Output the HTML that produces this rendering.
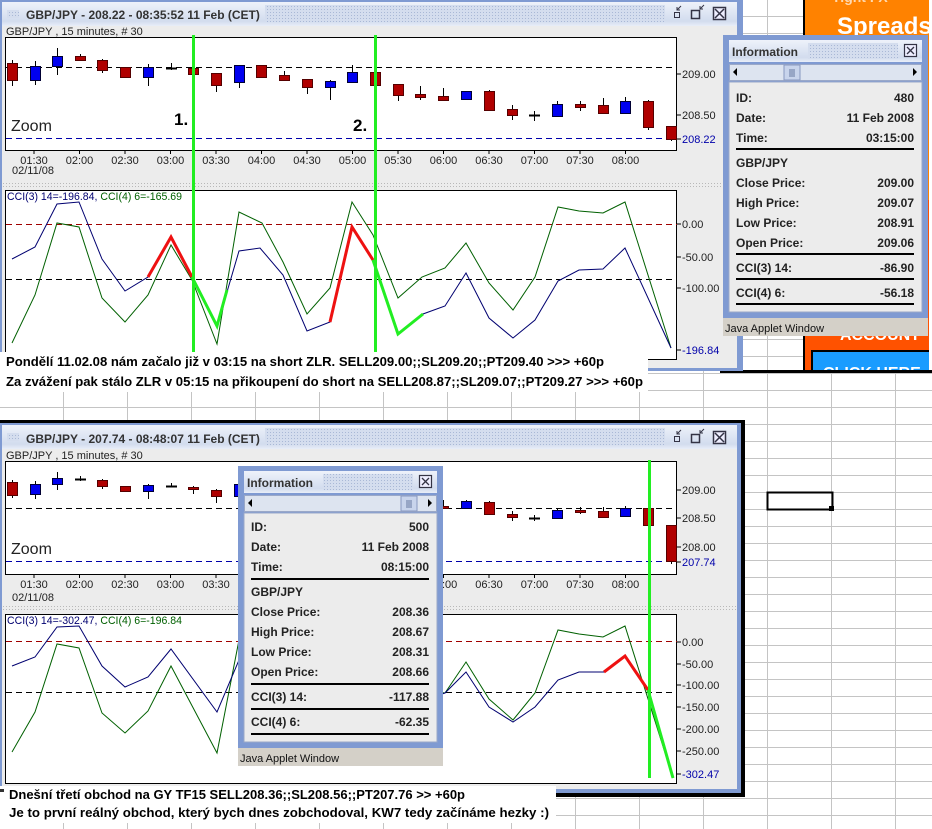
<!DOCTYPE html>
<html><head><meta charset="utf-8">
<style>
html,body{margin:0;padding:0;background:#fff;width:932px;height:829px;overflow:hidden}
svg{display:block}
text{font-family:"Liberation Sans",Arial,sans-serif}
</style></head>
<body>
<svg id="s" width="932" height="829" viewBox="0 0 932 829" xmlns="http://www.w3.org/2000/svg">
<defs>
<pattern id="grid" patternUnits="userSpaceOnUse" x="63" y="407" width="64" height="17">
<path d="M0.5 0V17M0 0.5H64" stroke="#c4c4c4" stroke-width="1" fill="none"/>
</pattern>
<pattern id="dots" patternUnits="userSpaceOnUse" width="3" height="3">
<rect width="3" height="3" fill="#d4ddee"/><rect width="1" height="1" fill="#a9b8d6"/>
</pattern>
<pattern id="dots2" patternUnits="userSpaceOnUse" width="3" height="3">
<rect width="3" height="3" fill="#ececec"/><rect width="1" height="1" fill="#b8b8b8"/>
</pattern>
<linearGradient id="tg" x1="0" y1="0" x2="0" y2="1">
<stop offset="0" stop-color="#eef2fa"/><stop offset="0.8" stop-color="#d2dcee"/><stop offset="1" stop-color="#e8eef8"/>
</linearGradient>
<clipPath id="c1"><rect x="6" y="38" width="671" height="112"/></clipPath>
<clipPath id="c2"><rect x="6" y="191" width="671" height="168"/></clipPath>
<clipPath id="c3"><rect x="6" y="462" width="671" height="112"/></clipPath>
<clipPath id="c4"><rect x="6" y="615" width="671" height="168"/></clipPath>
<clipPath id="ad"><rect x="805" y="0" width="124" height="370"/></clipPath>
</defs>
<rect width="932" height="829" fill="#fff"/>
<rect width="932" height="829" fill="url(#grid)"/>

<!-- Ad -->
<rect x="803" y="0" width="129" height="372" fill="#000"/>
<g clip-path="url(#ad)">
<rect x="805" y="0" width="124" height="200" fill="#ff8200"/>
<rect x="805" y="200" width="124" height="170" fill="#ff5200"/>
<text x="832" y="2" font-size="14" font-weight="bold" fill="#ffd9b0">Tight FX</text>
<text x="837" y="34" font-size="24" font-weight="bold" fill="#fff">Spreads</text>
<text x="840" y="340" font-size="16" font-weight="bold" fill="#fff">ACCOUNT</text>
<rect x="811" y="350" width="120" height="22" fill="#000"/>
<rect x="813" y="352" width="116" height="18" fill="#1a9cff"/>
<text x="823" y="378" font-size="16" font-weight="bold" fill="#fff">CLICK HERE</text>
</g>
<rect x="929" y="0" width="3" height="372" fill="#fff"/>
<rect x="720" y="370" width="212" height="3" fill="#000"/>

<!-- Top window -->
<rect x="0" y="0" width="743" height="371" fill="#7f9ad2"/>
<rect x="2" y="2" width="735" height="366" fill="#ececec"/>
<rect x="2" y="2" width="735" height="24" fill="url(#tg)"/>
<rect x="265" y="5" width="400" height="17" fill="url(#dots)"/>
<rect x="7" y="10" width="12" height="8" fill="url(#dots)"/>
<text x="26" y="19" font-size="12" font-weight="bold" fill="#333">GBP/JPY - 208.22 - 08:35:52  11 Feb (CET)</text>
<text x="6" y="35" font-size="11" fill="#222">GBP/JPY , 15 minutes, # 30</text>
<rect x="5.5" y="37.5" width="671" height="113" fill="#fff" stroke="#000"/>
<rect x="5.5" y="190.5" width="671" height="169" fill="#fff" stroke="#000"/>
<rect x="2" y="183" width="735" height="6" fill="url(#dots2)"/>
<text x="12" y="174" font-size="11" fill="#222">02/11/08</text>

<!-- Bottom window -->
<rect x="0" y="420" width="745" height="377" fill="#000"/>
<rect x="0" y="423" width="741" height="370" fill="#7f9ad2"/>
<rect x="2" y="425" width="735" height="364" fill="#ececec"/>
<rect x="2" y="425" width="735" height="24" fill="url(#tg)"/>
<rect x="265" y="428" width="400" height="17" fill="url(#dots)"/>
<rect x="7" y="433" width="12" height="8" fill="url(#dots)"/>
<text x="26" y="443" font-size="12" font-weight="bold" fill="#333">GBP/JPY - 207.74 - 08:48:07  11 Feb (CET)</text>
<text x="6" y="459" font-size="11" fill="#222">GBP/JPY , 15 minutes, # 30</text>
<rect x="5.5" y="461.5" width="671" height="113" fill="#fff" stroke="#000"/>
<rect x="5.5" y="614.5" width="671" height="169" fill="#fff" stroke="#000"/>
<rect x="2" y="606" width="735" height="6" fill="url(#dots2)"/>
<text x="12" y="601" font-size="11" fill="#222">02/11/08</text>

<g id="dyn"></g>

<!-- texts top -->
<rect x="0" y="352" width="648" height="40" fill="#fff"/>
<text x="6" y="366" font-size="13" font-weight="bold" fill="#000" textLength="598" lengthAdjust="spacingAndGlyphs">Pondělí 11.02.08 nám začalo již v 03:15 na short ZLR. SELL209.00;;SL209.20;;PT209.40 &gt;&gt;&gt; +60p</text>
<text x="6" y="386" font-size="13" font-weight="bold" fill="#000" textLength="637" lengthAdjust="spacingAndGlyphs">Za zvážení pak stálo ZLR v 05:15 na přikoupení do short na SELL208.87;;SL209.07;;PT209.27 &gt;&gt;&gt; +60p</text>
<!-- texts bottom -->
<rect x="0" y="786" width="556" height="37" fill="#fff"/>
<rect x="0" y="789" width="4" height="3" fill="#333"/>
<text x="9" y="799" font-size="13" font-weight="bold" fill="#000" textLength="456" lengthAdjust="spacingAndGlyphs">Dnešní třetí obchod na GY TF15 SELL208.36;;SL208.56;;PT207.76 &gt;&gt; +60p</text>
<text x="9" y="817" font-size="13" font-weight="bold" fill="#000" textLength="540" lengthAdjust="spacingAndGlyphs">Je to první reálný obchod, který bych dnes zobchodoval, KW7 tedy začínáme hezky :)</text>

<!-- selected excel cell -->
<rect x="767.5" y="492.5" width="65" height="17" fill="none" stroke="#000" stroke-width="2"/>
<rect x="829" y="506" width="5" height="5" fill="#000"/>

<g id="info"></g>
</svg>
<script>
var NS="http://www.w3.org/2000/svg",dyn=document.getElementById('dyn');
function el(p,t,a,txt){var e=document.createElementNS(NS,t);for(var k in a)e.setAttribute(k,a[k]);if(txt!=null)e.textContent=txt;p.appendChild(e);return e;}
var cx=[12,35,57,80,102,125,148,171,193,216,239,261,284,307,330,352,375,398,420,443,466,489,512,534,557,580,603,625,648,671];
var top1=[['r',63,80,60,86],['b',66,80,61,85],['b',56,66,48,75],['r',56,60,54,61],['r',60,70,59,73],['r',67,77,67,77],['b',67,77,64,86],['x',68,68,63,70],['r',68,74,68,74],['r',73,85,73,92],['b',65,82,65,88],['r',65,77,65,77],['r',75,80,71,81],['r',79,87,79,94],['b',81,87,80,100],['b',72,82,65,82],['r',72,85,72,85],['r',84,95,84,101],['r',94,97,86,100],['r',96,100,88,100],['b',91,99,91,99],['r',91,110,90,110],['r',109,115,105,120],['x',115,115,111,121],['b',104,116,101,117],['r',104,107,101,111],['r',105,113,98,114],['b',101,113,97,113],['r',101,127,100,130],['r',126,139,126,141]];
var bot1=[['r',482,495,480,498],['b',484,494,481,499],['b',478,484,472,490],['x',479,479,476,481],['r',480,486,479,489],['r',486,491,486,491],['b',485,491,484,499],['x',486,486,483,487],['r',487,489,486,494],['r',490,496,489,503],['b',484,496,484,500],['r',484,494,484,494],['r',494,498,492,499],['r',497,503,497,508],['b',499,504,498,512],['b',493,500,490,500],['r',493,502,493,502],['r',500,507,500,511],['r',505,508,502,510],['r',506,508,500,509],['b',501,508,500,508],['r',502,514,501,514],['r',514,517,511,521],['x',518,518,515,521],['b',510,518,509,519],['r',510,512,507,514],['r',511,517,507,518],['b',508,516,506,516],['r',508,525,508,525],['r',525,561,525,564]];
function candles(data,clip,dashB,dashBlue){
 var g=el(dyn,'g',{'clip-path':'url(#'+clip+')'});
 el(g,'line',{x1:6,x2:677,y1:dashB+.5,y2:dashB+.5,stroke:'#000','stroke-dasharray':'6 4'});
 el(g,'line',{x1:6,x2:677,y1:dashBlue+.5,y2:dashBlue+.5,stroke:'#0000aa','stroke-dasharray':'6 4'});
 data.forEach(function(d,i){var x=cx[i];
  el(g,'line',{x1:x+.5,x2:x+.5,y1:d[3],y2:d[4],stroke:'#000'});
  if(d[0]=='x'){el(g,'line',{x1:x-5,x2:x+6,y1:d[1]+.5,y2:d[1]+.5,stroke:'#000','stroke-width':2});}
  else el(g,'rect',{x:x-4.5,y:d[1]+.5,width:10,height:Math.max(2,d[2]-d[1]),fill:d[0]=='r'?'#b00000':'#0000f0',stroke:d[0]=='r'?'#500':'#003'});
 });
 el(g,'text',{x:11,y:dashBlue-7,'font-size':16,fill:'#222'},'Zoom');
}
candles(top1,'c1',67,138);
candles(bot1,'c3',508,561);
function times(y){['01:30','02:00','02:30','03:00','03:30','04:00','04:30','05:00','05:30','06:00','06:30','07:00','07:30','08:00'].forEach(function(t,i){var x=34+i*45.5;el(dyn,'line',{x1:x,x2:x,y1:y-14,y2:y-10,stroke:'#000'});el(dyn,'text',{x:x,y:y,'font-size':11,fill:'#222','text-anchor':'middle'},t);});}
times(164);times(588);
function ylab(arr){arr.forEach(function(a){el(dyn,'line',{x1:677,x2:681,y1:a[0],y2:a[0],stroke:'#000'});el(dyn,'text',{x:682,y:a[0]+4,'font-size':11,fill:a[2]||'#222'},a[1]);});}
ylab([[74,'209.00'],[115,'208.50'],[139,'208.22','#0000aa']]);
ylab([[224,'0.00'],[257,'-50.00'],[288,'-100.00'],[350,'-196.84','#0000aa']]);
ylab([[490,'209.00'],[518,'208.50'],[547,'208.00'],[562,'207.74','#0000aa']]);
ylab([[642,'0.00'],[664,'-50.00'],[685,'-100.00'],[707,'-150.00'],[729,'-200.00'],[751,'-250.00'],[774,'-302.47','#0000aa']]);
function pl(g,pts,col,w){el(g,'polyline',{points:pts,fill:'none',stroke:col,'stroke-width':w,'stroke-linejoin':'miter'});}
function legend(g,y,a,b){var t=el(g,'text',{x:7,y:y,'font-size':11,textLength:175,lengthAdjust:'spacingAndGlyphs'});
 el(t,'tspan',{fill:'#000070'},a);el(t,'tspan',{fill:'#006000'},b);}
// top CCI
var g2=el(dyn,'g',{'clip-path':'url(#c2)'});
el(g2,'line',{x1:6,x2:677,y1:224.5,y2:224.5,stroke:'#a00000','stroke-dasharray':'6 4'});
el(g2,'line',{x1:6,x2:677,y1:279.5,y2:279.5,stroke:'#000','stroke-dasharray':'6 4'});
pl(g2,'12,343 35,295 57,223 79,227 102,298 125,322 148,295 171,245 192,280 217,344 239,212 262,223 283,262 307,314 330,288 352,202 373,235 398,298 422,277 445,268 466,243 489,283 513,310 535,277 558,207 579,211 603,213 625,202 671,348','#006000',1);
pl(g2,'12,259 35,247 57,204 79,202 102,259 125,291 148,277 171,237 192,277 217,326 239,251 260,248 283,275 307,331 330,322 352,227 373,260 398,334 423,314 445,306 466,273 489,318 513,338 535,320 558,281 579,270 603,269 625,248 671,348','#000070',1);
pl(g2,'148,277 171,237 192,277','#ee1111',3);
pl(g2,'192,277 217,326 227,290','#22ee22',3);
pl(g2,'330,322 352,227 373,260','#ee1111',3);
pl(g2,'373,260 398,334 423,314','#22ee22',3);
legend(g2,200,'CCI(3) 14=-196.84, ','CCI(4) 6=-165.69');
// bottom CCI
var g4=el(dyn,'g',{'clip-path':'url(#c4)'});
el(g4,'line',{x1:6,x2:677,y1:641.5,y2:641.5,stroke:'#a00000','stroke-dasharray':'6 4'});
el(g4,'line',{x1:6,x2:677,y1:692.5,y2:692.5,stroke:'#000','stroke-dasharray':'6 4'});
pl(g4,'12,752 35,712 57,644 79,648 102,713 125,733 148,711 171,666 217,753 239,640 262,650 283,670 307,700 330,690 352,640 373,660 398,700 422,690 445,693 466,662 489,699 513,720 535,693 558,630 579,634 603,637 625,626 673,778','#006000',1);
pl(g4,'12,666 35,657 57,627 79,626 102,666 125,687 148,677 171,649 217,712 239,660 262,662 283,675 307,700 330,700 352,660 373,672 398,705 422,700 445,693 466,672 489,707 513,722 535,707 558,680 579,672 604,672 625,656 648,690 673,778','#000070',1);
pl(g4,'604,672 625,656 648,690','#ee1111',3);
pl(g4,'648,690 673,778','#22ee22',3);
legend(g4,624,'CCI(3) 14=-302.47, ','CCI(4) 6=-196.84');
// green vertical lines
[[193,35,352],[375,35,352]].forEach(function(v){el(dyn,'rect',{x:v[0]-1,y:v[1],width:3,height:v[2]-v[1],fill:'#22ee22'});});
el(dyn,'rect',{x:648,y:460,width:3,height:318,fill:'#22ee22'});
el(dyn,'text',{x:174,y:125,'font-size':17,'font-weight':'bold',fill:'#000'},'1.');
el(dyn,'text',{x:353,y:131,'font-size':17,'font-weight':'bold',fill:'#000'},'2.');
// window buttons
function btns(y){var g=dyn;
 el(g,'rect',{x:674.5,y:y+8.5,width:5,height:5,fill:'none',stroke:'#334'});
 el(g,'path',{d:'M681 '+(y+2)+'l-4 4m0 -3v3h3',fill:'none',stroke:'#334'});
 el(g,'rect',{x:691.5,y:y+6.5,width:8,height:8,fill:'none',stroke:'#334','stroke-width':1.5});
 el(g,'path',{d:'M704 '+(y+1)+'l-4 4m0 -3v3h3',fill:'none',stroke:'#334'});
 el(g,'rect',{x:713.5,y:y+3.5,width:12,height:12,fill:'#eef',stroke:'#334','stroke-width':1.5});
 el(g,'path',{d:'M715 '+(y+5)+'l9 9m0 -9l-9 9',fill:'none',stroke:'#334','stroke-width':1.5});}
btns(4);btns(428);
// info windows
var inf=document.getElementById('info');
function info(x,y,h,vals,thumb){
 var w=205;
 el(inf,'rect',{x:x,y:y,width:w,height:h,fill:'#7f9ad2'});
 el(inf,'rect',{x:x+6,y:y+5,width:w-12,height:22,fill:'url(#tg)'});
 el(inf,'rect',{x:x+85,y:y+8,width:90,height:16,fill:'url(#dots)'});
 el(inf,'text',{x:x+9,y:y+21,'font-size':12,'font-weight':'bold',fill:'#333'},'Information');
 el(inf,'rect',{x:x+181.5,y:y+9.5,width:12,height:12,fill:'#eef',stroke:'#334','stroke-width':1.2});
 el(inf,'path',{d:'M'+(x+184)+' '+(y+12)+'l7 7m0 -7l-7 7',stroke:'#334','stroke-width':1.3});
 el(inf,'rect',{x:x+6,y:y+29,width:w-12,height:17,fill:'#dde4f0'});
 el(inf,'rect',{x:x+6.5,y:y+29.5,width:w-13,height:16,fill:'none',stroke:'#9aa8c8'});
 el(inf,'path',{d:'M'+(x+10)+' '+(y+37)+'l4 -4v8z',fill:'#000'});
 el(inf,'path',{d:'M'+(x+w-11)+' '+(y+37)+'l-4 -4v8z',fill:'#000'});
 el(inf,'rect',{x:x+thumb,y:y+30,width:16,height:15,fill:'#c8d4ec',stroke:'#8898c0'});
 el(inf,'path',{d:'M'+(x+thumb+6)+' '+(y+34)+'v8m2 -8v8m2 -8v8',stroke:'#6677a0'});
 el(inf,'rect',{x:x+6,y:y+47,width:w-12,height:h-53,fill:'#ececec',stroke:'#9aa8c8'});
 vals.forEach(function(v){
  if(v[0]=='-'){el(inf,'rect',{x:x+13,y:y+v[1],width:w-27,height:2,fill:'#000'});return;}
  el(inf,'text',{x:x+13,y:y+v[2],'font-size':12,'font-weight':'bold',fill:'#222'},v[0]);
  if(v[1])el(inf,'text',{x:x+w-14,y:y+v[2],'font-size':12,'font-weight':'bold',fill:'#222','text-anchor':'end'},v[1]);
 });
 el(inf,'rect',{x:x,y:y+h,width:w,height:18,fill:'#d4d0c8'});
 el(inf,'text',{x:x+2,y:y+h+14,'font-size':11,fill:'#111'},'Java Applet Window');
}
info(723,35,283,[['ID:','480',67],['Date:','11 Feb 2008',87],['Time:','03:15:00',107],['-',113],['GBP/JPY','',132],['Close Price:','209.00',152],['High Price:','209.07',172],['Low Price:','208.91',192],['Open Price:','209.06',212],['-',218],['CCI(3) 14:','-86.90',237],['-',243],['CCI(4) 6:','-56.18',262],['-',268]],61);
info(238,466,282,[['ID:','500',65],['Date:','11 Feb 2008',85],['Time:','08:15:00',105],['-',112],['GBP/JPY','',130],['Close Price:','208.36',150],['High Price:','208.67',170],['Low Price:','208.31',190],['Open Price:','208.66',210],['-',217],['CCI(3) 14:','-117.88',235],['-',242],['CCI(4) 6:','-62.35',260],['-',267]],163);
</script>
</body></html>
